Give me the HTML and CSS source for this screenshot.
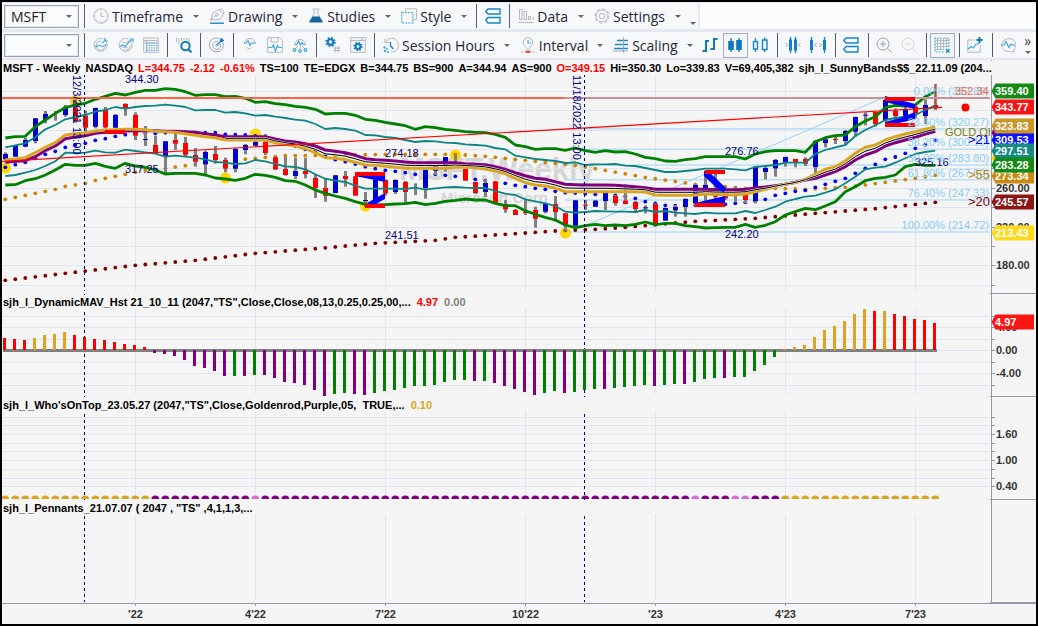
FILE: index.html
```html
<!DOCTYPE html>
<html lang="en">
<head>
<meta charset="utf-8">
<title>MSFT - Weekly</title>
<link rel="stylesheet" href="styles.css">
</head>
<body>
<div class="app">
<header class="toolbars">
  <div class="toolbar toolbar-main">
    <span class="combo"><select aria-label="Symbol"><option>MSFT</option></select></span>
    <span class="sep"></span>
    <button class="menu"><svg class="icon" viewBox="0 0 16 16"><g class="g"><circle cx="8" cy="8" r="7.2"/><path d="M8 4v4l3.5 1M8 1v1.5M8 13.5V15M1 8h1.5M13.5 8H15M4 4l-.8-.8M12 4l.8-.8M4 12l-.8.8M12 12l.8.8"/></g></svg>Timeframe<i class="caret"></i></button>
    <button class="menu"><svg class="icon" viewBox="0 0 16 16"><g class="g"><path d="M1.500 12L4 5l6-3.500 4.500 4.500L11 11.500z M1.500 12l5.500-4.500M9.500 1.500L13 1l2 3-.5 2"/><circle cx="8" cy="6.800" r="1.300"/></g><path class="b" d="M1 15.200h14"/></svg>Drawing<i class="caret"></i></button>
    <button class="menu"><svg class="icon" viewBox="0 0 16 16"><path class="g" d="M6 1.500v4.500L1.500 13.500M10 1.500v4.500l4.500 7.500M4.500 1h7"/><path class="fd" d="M4.500 8.500h7l3.500 6H1z"/></svg>Studies<i class="caret"></i></button>
    <button class="menu"><svg class="icon" viewBox="0 0 16 16"><path class="g" d="M4.500 4V.800h11v10.500h-3"/><path class="l" stroke-dasharray="2 1" d="M.800 4.500h11v10.500h-11z"/></svg>Style<i class="caret"></i></button>
    <span class="sep"></span>
    <button class="tool" aria-label="Align panes"><svg class="icon" viewBox="0 0 16 16"><path class="b" d="M3 1h12v5H3L.800 3.500zM3 9.500h12v5.500H3L.800 12.200z"/></svg></button>
    <span class="sep"></span>
    <button class="menu"><svg class="icon" viewBox="0 0 16 16"><path class="g" d="M1.500 1.500h2.500v10H1.500zM6 3.500h2.500v8H6zM10.500 8.500h2v3h-2zM14 10h1.500v1.500M.500 14.500h15" /></svg>Data<i class="caret"></i></button>
    <button class="menu"><svg class="icon" viewBox="0 0 16 16"><circle class="g" cx="8" cy="8" r="6"/><circle class="g" cx="8" cy="8" r="2.800"/><circle class="g" cx="8" cy="8" r="7.100" stroke-dasharray="2.800 2.780"/></svg>Settings<i class="caret"></i></button>
    <span class="more"><i class="caret small"></i></span>
  </div>
  <div class="toolbar">
    <span class="combo"><select aria-label="Account"><option></option></select></span>
    <span class="sep"></span>
    <button class="tool" aria-label="Target trend"><svg class="icon" viewBox="0 0 16 16"><path class="g" d="M13.500 5a6.500 6.500 0 1 1-3-3M12 10a4.500 4.500 0 1 1-4-6"/><path class="l" d="M1.500 8.500c2 3 3-1 5 0s3 2 7-1M9 6l4-3.500M12 1v3h3"/></svg></button>
    <button class="tool" aria-label="Target line"><svg class="icon" viewBox="0 0 16 16"><path class="g" d="M13.500 5a6.500 6.500 0 1 1-3-3M5 12.500c3 2 7 0 7-4"/><path class="l" d="M1.500 10l3-2 3 1.500 3-4 3-2.500M12 2h3v3"/><path class="g" d="M4 5l4 1 4-3M4 10l6 1"/></svg></button>
    <button class="tool" aria-label="Grid"><svg class="icon" viewBox="0 0 16 16"><path class="g" d="M.700 1h14.600v14.300H.700zM1 3.500h14M3.500 3.500v11.500M15 6h-14"/><path class="l" stroke-dasharray="1.500 1" d="M3 6h12M3 8.500h12M3 11h12M3 13.300h12"/></svg></button>
    <span class="sep"></span>
    <button class="tool" aria-label="Find"><svg class="icon" viewBox="0 0 16 16"><path class="g" d="M.500 1v4M3 1v6M5.500 1v3M8 1v2M10.500 1v2M13 1v3"/><circle class="b2" cx="9.500" cy="9" r="4.200"/><path class="b2" d="M12.500 12.500l3 3"/></svg></button>
    <span class="sep"></span>
    <button class="tool" aria-label="Target"><svg class="icon" viewBox="0 0 16 16"><path class="gd" d="M14 5.500A7 7 0 1 1 10.500 1.600M11.500 7A4 4 0 1 1 9 4.600"/><circle class="gd" cx="7.700" cy="8.300" r="1"/><path class="b" d="M8 8l5.500-5.500"/><path class="fb" d="M10.500 3l2.500-2.500.5 2 2 .5-2.500 2.500z"/></svg></button>
    <span class="sep"></span>
    <button class="tool" aria-label="Pulse"><svg class="icon" viewBox="0 0 16 16"><path class="g" d="M2.300 7a5.500 5.500 0 1 1 11 0M4.500 10.500l3 1.500 2-1.500"/><path class="l" d="M2 6h2.500L6 3.500l2 5L9.500 6H13.500"/></svg></button>
    <button class="tool" aria-label="Save analysis"><svg class="icon" viewBox="0 0 16 16"><path class="g" d="M.700.700h12l2.600 2.500v12.100H.700zM4 1v4h7V1"/><path class="l" d="M1 10.500h4l1.500-2.500 2 6 2-5.500 1 2H15"/></svg></button>
    <button class="tool" aria-label="Share analysis"><svg class="icon" viewBox="0 0 16 16"><path class="g" d="M2.500 8a5.500 5.500 0 1 1 11 0M6 9l-3 3M10 9l3 3M8 9v4"/><path class="l" d="M3 7.500h2L6.500 4l2 4L10 5.500l1.500 2h2"/><g class="l"><circle cx="2.500" cy="13" r="1.300"/><circle cx="8" cy="14" r="1.300"/><circle cx="13.500" cy="13" r="1.300"/></g></svg></button>
    <span class="sep"></span>
    <button class="tool" aria-label="Number format"><svg class="icon" viewBox="0 0 16 16"><circle class="b2" cx="5.500" cy="5" r="2.800"/><circle class="b2" cx="5.500" cy="5" r="4.200" stroke-dasharray="1.600 1.700"/><path class="g" d="M11 9l-1 6.500M14 9l-1 6.500M8.500 11h7M8 13.500h7"/></svg></button>
    <button class="tool" aria-label="Window settings"><svg class="icon" viewBox="0 0 16 16"><path class="g" d="M.700.700h14.600v14.600H.700zM1 3.500h14M11 2.200h2"/><circle class="b2" cx="8" cy="9.500" r="2.400"/><circle class="b2" cx="8" cy="9.500" r="3.700" stroke-dasharray="1.400 1.500"/></svg></button>
    <span class="sep"></span>
    <button class="menu"><svg class="icon" viewBox="0 0 16 16"><path class="g" d="M2.500 5A7 7 0 1 1 8 15.200M2 1.500V5.500h4"/><path class="b" d="M7.500 5v4l3 3"/><g class="fl"><circle cx="1.500" cy="10.500" r="1.200"/><circle cx="4" cy="12" r="1"/><circle cx="2" cy="14" r="1.200"/><circle cx="5" cy="15" r="1"/></g></svg>Session Hours<i class="caret"></i></button>
    <button class="menu"><svg class="icon" viewBox="0 0 16 16"><path class="g" d="M8 13.500L4.500 8.500a4.700 4.700 0 1 1 7 0zM1 15h3M12 15h3"/><path class="l" d="M8 3v3h2.500"/><path class="r" d="M5.500 14.800h5"/></svg>Interval<i class="caret"></i></button>
    <button class="menu"><svg class="icon" viewBox="0 0 16 16"><path class="b" d="M4 3.500h11M2 7.500h13M1 11.500h14"/><path class="gd" d="M10.500.500v15M0 14h15"/></svg>Scaling<i class="caret"></i></button>
    <button class="tool" aria-label="OHLC bars"><svg class="icon" viewBox="0 0 16 16"><path class="b2" d="M4 3v12M4 4h3M.500 14H4M12 1v12M12 2h3.500M8.500 12H12"/></svg></button>
    <button class="tool active" aria-label="Candlesticks"><svg class="icon" viewBox="0 0 16 16"><path class="b" d="M4 1v14M12 1v14"/><path class="fb" d="M1.200 4h5.600v9H1.200zM9.200 3h5.600v10H9.200z"/></svg></button>
    <button class="tool" aria-label="Hollow candles"><svg class="icon" viewBox="0 0 16 16"><path class="b" d="M1.500 4.500h4v7.500h-4zM3.500 1v3.500M3.500 12v3M10.500 3h4.500v9.500h-4.500zM12.700.500V3M12.700 12.500V15"/></svg></button>
    <span class="sep"></span>
    <button class="tool" aria-label="Decrease bar spacing"><svg class="icon" viewBox="0 0 16 16"><path class="b3" d="M5.500 2.500v11M10.500 2.500v11"/><path class="b" d="M5.500 0v16M10.500 0v16"/><path class="gd" d="M.500 6l2 2-2 2M15.500 6l-2 2 2 2"/></svg></button>
    <button class="tool" aria-label="Increase bar spacing"><svg class="icon" viewBox="0 0 16 16"><path class="b3" d="M1.500 3v10M14.500 3v10"/><path class="b" d="M1.500 0v16M14.500 0v16"/><path class="gd" d="M6.500 6l-2 2 2 2M9.500 6l2 2-2 2"/></svg></button>
    <span class="sep"></span>
    <button class="tool" aria-label="Stack panes"><svg class="icon" viewBox="0 0 16 16"><path class="b" d="M3 1h12v5H3L.800 3.500zM3 9.500h12v5.500H3L.800 12.200z"/></svg></button>
    <span class="sep"></span>
    <button class="tool" aria-label="Zoom in"><svg class="icon" viewBox="0 0 16 16"><g class="gd"><circle cx="7" cy="7" r="6"/><path d="M11.500 11.500l4 4M4 7h6M7 4v6"/></g></svg></button>
    <button class="tool" aria-label="Zoom out"><svg class="icon" viewBox="0 0 16 16"><g class="gl"><circle cx="7" cy="7" r="6"/><path d="M11.500 11.500l4 4M4 7h6"/></g></svg></button>
    <span class="sep"></span>
    <button class="tool active" aria-label="Data window"><svg class="icon" viewBox="0 0 16 16"><path class="g" d="M1 3.500h14M1 6.500h14M1 9.500h14M1 12.500h9M3.500 1v12M6.500 1v12M9.500 1v12M12.500 1v9"/><path class="l" stroke-dasharray="1.500 1.500" d="M1 1h14v9M1 1v14h9"/><path class="b" d="M12 12l3.500 3.500M15.500 12L12 15.500"/></svg></button>
    <span class="sep"></span>
    <button class="tool" aria-label="Add study"><svg class="icon" viewBox="0 0 16 16"><path class="g" d="M8 3H.800v12.200h12.500V8"/><path class="l" d="M1 12l3-2.500 2.500 1.500L9 7h2.500l1.500-2"/><path class="b2" d="M12.500 0v6M9.500 3h6"/></svg></button>
    <span class="sep"></span>
    <button class="tool" aria-label="Chart commentary"><svg class="icon" viewBox="0 0 16 16"><path class="g" d="M13.500 13A7.200 6.500 0 1 0 8 14.500l6.500.5z"/><path class="l" d="M1 8h3l2-3.500 3 6L11 7l1 1h3"/></svg></button>
    <span class="more"><span class="chev">»</span><i class="caret small"></i></span>
  </div>
</header>

<main class="chart">
  <section class="pane">
    <h2 class="caption quote"><span>MSFT - Weekly</span><span>NASDAQ</span><span class="neg">L=344.75</span><span class="neg">-2.12</span><span class="neg">-0.61%</span><span>TS=100</span><span>TE=EDGX</span><span>B=344.75</span><span>BS=900</span><span>A=344.94</span><span>AS=900</span><span class="neg">O=349.15</span><span>Hi=350.30</span><span>Lo=339.83</span><span>V=69,405,382</span><span>sjh_l_SunnyBands$$_22.11.09 (204...</span></h2>
    <svg class="plot" id="price" viewBox="2 60 1034 234"></svg>
  </section>
  <section class="pane">
    <h2 class="caption"><span>sjh_l_DynamicMAV_Hst 21_10_11 (2047,"TS",Close,Close,08,13,0.25,0.25,00,...</span><span class="neg">4.97</span><span class="flat">0.00</span></h2>
    <svg class="plot" id="mav" viewBox="2 294 1034 103"></svg>
  </section>
  <section class="pane">
    <h2 class="caption"><span>sjh_l_Who'sOnTop_23.05.27 (2047,"TS",Close,Goldenrod,Purple,05,&nbsp; TRUE,...</span><span class="gold">0.10</span></h2>
    <svg class="plot" id="ontop" viewBox="2 397 1034 103"></svg>
  </section>
  <section class="pane">
    <h2 class="caption"><span>sjh_l_Pennants_21.07.07 ( 2047 , "TS" ,4,1,1,3,...</span></h2>
    <svg class="plot" id="pennants" viewBox="2 500 1034 103"></svg>
  </section>
  <svg class="plot" id="time" viewBox="2 603 1034 21"></svg>
</main>
</div>
<script src="chart.js"></script>
</body>
</html>
```

FILE: styles.css
```css
* { box-sizing: border-box; }
body { margin: 0; background: #000; font-family: "Open Sans", "Noto Sans", sans-serif; }
.app { border: 2px solid #000; background: #f5f5f5; }

.toolbars { background: #e3e8f1; padding: 1px 0 2px; display: flex; flex-direction: column; gap: 3px; overflow: hidden; }
.toolbar { display: flex; align-items: center; height: 26px; padding-left: 2px; background: #f7f8fa; }
.toolbar-main { background: linear-gradient(90deg, #f7f8fa 696px, #e3e8f1 696px 698px, #fcfcfe 698px); }
.combo { position: relative; display: block; flex: none; width: 76px; height: 23px; }
.combo select { appearance: none; width: 75px; height: 23px; margin: 0; padding: 0 6px; border: 1px solid #9aa2b2; border-radius: 0; background: #fafbfc; color: #222; font: 14px "Open Sans", sans-serif; box-shadow: inset 0 0 0 1px #e3e7ee; }
.combo::after { content: ""; position: absolute; right: 8px; top: 10px; border: 3px solid transparent; border-top-color: #666; border-bottom: 0; }
.sep { flex: none; width: 8px; height: 24px; background: linear-gradient(#565c6c, #565c6c) 4px 0 / 1px 100% no-repeat; }
button { margin: 0; border: 0; background: none; color: #1e2638; font: 14px "Open Sans", "Noto Sans", sans-serif; white-space: nowrap; }
.tool { flex: none; display: flex; align-items: center; justify-content: center; width: 25px; height: 25px; padding: 0; }
.tool.active { border: 1px solid #a4acb8; background: #f3f6f9; }
.menu { flex: none; display: flex; align-items: center; height: 25px; gap: 3px; padding: 0 5px; }
.icon { flex: none; display: block; width: 16px; height: 16px; fill: none; }
.caret { flex: none; margin-left: 6px; width: 6px; border: 3px solid transparent; border-top-color: #666; border-bottom: 0; }
.toolbar-main .caret { margin-left: 7px; }
.toolbar .caret.small { margin: 0; }
.more { flex: none; display: flex; flex-direction: column; justify-content: flex-end; align-items: center; gap: 4px; width: 14px; height: 25px; padding-bottom: 4px; }
.chev { font: 14px/12px "Open Sans", sans-serif; color: #444; }

.g, .gd, .gl, .b, .b2, .b3, .l, .r { fill: none; }
.g { stroke: #b4bac2; stroke-width: 1; }
.gd { stroke: #9ba5b0; stroke-width: 1; }
.gl { stroke: #d2d6da; stroke-width: 1; }
.b { stroke: #1686c8; stroke-width: 1.4; }
.b2 { stroke: #1079bd; stroke-width: 2; }
.b3 { stroke: #1079bd; stroke-width: 3; }
.l { stroke: #41aade; stroke-width: 1.2; }
.r { stroke: #e04030; stroke-width: 2; }
.fb { fill: #1079bd; }
.fd { fill: #17659c; }
.fl { fill: #41aade; }

.pane { position: relative; }
.plot { display: block; width: 100%; height: auto; font-family: "Liberation Sans", Arial, sans-serif; font-size: 11px; }
.caption { position: absolute; top: 1px; left: 1px; z-index: 1; display: flex; gap: 6px; margin: 0; height: 14px; font: bold 11px/15px "Liberation Sans", Arial, sans-serif; color: #000; background: #f5f5f5; white-space: nowrap; }
.caption.quote { gap: 5px; }
.neg { color: #f00; }
.flat { color: #808080; }
.gold { color: #daa520; }

.grid { stroke: #e0e5f0; stroke-width: 1; }
.axis { stroke: #929aaa; stroke-width: 1; }
.scale { font-weight: bold; fill: #333; }
.tagtext { font-weight: bold; fill: #fff; }
.mark { stroke: navy; stroke-width: 1; stroke-dasharray: 3 3; }
.note { fill: navy; }
.fib { stroke: #b9dff8; stroke-width: 1.5; }
.fibtext { fill: #87cefa; text-anchor: end; }
.mid { text-anchor: middle; }
.line { fill: none; stroke-linejoin: round; }
.water { fill: #d6d6d6; font-weight: bold; }
.water-lg { font-size: 31px; }
.water-sm { font-size: 15px; }
.side { font-size: 13px; }
```

FILE: chart.js
```javascript
const NS = "http://www.w3.org/2000/svg";
const $ = id => document.getElementById(id);
function add(to, tag, attrs, text) {
  const e = document.createElementNS(NS, tag);
  for (const k in attrs) e.setAttribute(k, attrs[k]);
  if (text !== undefined) e.textContent = text;
  to.appendChild(e);
  return e;
}
const seg = (to, x1, y1, x2, y2, a) => add(to, "line", { x1, y1, x2, y2, ...a });
const box = (to, x, y, width, height, fill) => add(to, "rect", { x, y, width, height, fill });
const label = (to, x, y, s, cls, a) => add(to, "text", { x, y, class: cls, ...a }, s);

const BLUE = "#0000d0", RED = "#ff0000", GOLD = "#daa520", PURPLE = "#800080", GREEN = "#008000", TEAL = "#0c8484";
const months = [135.5, 255.5, 385.5, 525.5, 655.5, 785.5, 915.5];

function frame(svg, top, bottom, rows, ticks) {
  for (const x of months) seg(svg, x, top + 14, x, bottom - 3, { class: "grid" });
  for (const y of rows) {
    seg(svg, 2, y + .5, 990, y + .5, { class: "grid" });
    seg(svg, 991, y + .5, 995, y + .5, { class: "axis" });
  }
  seg(svg, 991.5, top, 991.5, bottom, { class: "axis" });
  seg(svg, 990, bottom - .5, 1036, bottom - .5, { class: "axis" });
  for (const [y, s] of ticks) label(svg, 996, y + 4, s, "scale");
}
function sessions(svg, top, bottom) {
  for (const x of [84.5, 584.5]) seg(svg, x, top, x, bottom, { class: "mark" });
}
function tag(svg, y, s, color, h = 15) {
  add(svg, "path", { d: `M991.5 ${y}l4-${h / 2}h38.500v${h}h-38.500z`, fill: color });
  label(svg, 995, y + 4, s, "tagtext");
}

/* Price pane: series values are [bar, y] knots, in thirds of a unit below the pane top. */
const Y = c => 60 + c / 3;
const X = i => 5.3 + 10 * i;
const dense = (start, s) => s.split(" ").map((v, k) => [start + k, +v]);
const upperGreen = dense(0, "234 230 229 200 180 160 143 135 130 118 109 100 105 97 91 91 86 88 95 106 104 104 110 109 115 127 125 131 134 139 142 148 162 160 160 166 178 181 187 192 197 208 200 203 208 211 215 217 218 223 232 255 260 268 266 266 271 264 272 277 272 276 275 282 292 296 303 304 299 296 290 290 290 290 297 282 275 272 272 272 277 245 233 227 225 200 183 170 143 136 138 135 110 95");
const upperTeal = dense(0, "262 256 250 232 208 195 178 171 165 155 150 141 146 141 138 137 134 137 141 151 150 150 158 156 160 167 165 170 174 179 182 192 207 204 207 212 225 226 231 234 240 246 243 244 248 249 253 255 257 264 268 287 292 297 300 303 309 307 315 313 313 312 317 318 324 330 336 336 333 330 326 326 326 328 331 321 318 315 308 308 308 282 270 262 255 228 210 196 180 174 170 165 150 137");
const midGold = dense(0, "299 297 293 278 262 248 225 221 219 213 210 209 208 208 209 214 215 217 221 226 230 233 240 240 240 240 240 248 253 258 266 278 293 295 299 307 315 316 319 322 325 325 325 325 325 322 322 323 327 333 341 355 368 375 378 385 395 395 395 395 395 395 395 395 396 405 406 406 406 406 402 403 404 404 402 395 388 380 372 368 358 343 328 320 303 280 262 255 240 230 222 215 208 201");
const midPurple = dense(0, "307 304 302 290 272 258 236 231 227 220 217 214 213 212 212 212 214 214 215 217 221 225 230 230 230 230 230 237 243 246 251 258 270 274 278 286 296 299 301 303 306 308 308 308 308 308 311 313 314 320 328 338 347 355 358 365 373 374 375 375 375 376 378 380 383 388 388 388 388 388 388 389 389 389 388 384 381 377 373 367 360 355 345 335 320 300 285 275 258 248 240 232 222 214");
const lowerTeal = dense(0, "348 345 338 330 318 304 278 279 278 272 277 278 269 273 277 281 290 287 290 293 298 306 308 312 310 300 304 312 319 321 328 343 356 362 366 377 386 386 386 386 387 383 389 385 382 381 383 384 384 393 401 405 418 424 430 438 455 458 456 453 454 455 455 456 450 456 453 458 460 462 458 460 460 460 453 459 450 440 425 417 410 407 398 388 370 350 328 323 320 308 295 282 276 272");
const lowerGreen = dense(0, "375 374 362 356 345 330 313 316 316 310 319 325 310 318 322 330 342 340 340 340 345 354 357 361 355 343 346 352 362 364 375 390 400 408 415 425 433 434 434 432 431 427 434 430 424 421 417 420 420 430 437 437 452 463 472 480 495 503 497 493 497 495 497 493 486 494 490 490 497 500 504 503 502 502 493 502 496 485 465 455 445 449 438 425 395 380 362 355 352 345 320 313 316 316");
const blueDots = dense(0, "322 314 307 295 283 274 262 255 250 241 236 229 224 220 220 220 218 216 218 218 218 218 223 224 225 228 233 245 252 258 268 275 287 299 305 312 320 326 331 334 338 343 342 343 346 349 352 358 362 370 370 376 380 385 388 394 398 399 401 403 404 406 409 415 425 430 436 437 436 436 435 434 433 430 427 424 418 406 400 394 391 382 373 364 355 340 325 313 298 291 280 265 254 241");
const goldDots = [[0,418],[5,388],[6,379],[8,370],[9,361],[12,343],[14,330],[16,325],[19,313],[22,303],[25,295],[28,287],[33,286],[38,283],[45,283],[48,289],[50,295],[54,307],[57,316],[60,331],[64,352],[69,373],[74,385],[77,385],[80,388],[84,382],[88,367],[93,346]];
const maroonDots = [[0,661],[6,640],[13,616],[19,601],[25,580],[31,566],[37,550],[43,541],[45,532],[50,523],[53,517],[56,511],[59,508],[62,502],[65,494],[69,484],[75,475],[81,460],[87,446],[93,427]];
function at(knots, i) {
  for (let k = 1; k < knots.length; k++) {
    const [a, p] = knots[k - 1], [b, q] = knots[k];
    if (i <= b) return p + (q - p) * (i - a) / (b - a);
  }
}
const path = pts => pts.map(([i, c]) => `${X(i).toFixed(1)},${Y(c).toFixed(1)}`).join(" ");
const curve = (svg, pts, stroke, w) => add(svg, "polyline", { points: path(pts), stroke, "stroke-width": w, class: "line" });

/* wick top, wick bottom, body top, body bottom, colour */
const candles = `277 298 282 298 B|255 290 255 290 B|233 262 240 260 B|174 250 175 243 B|153 190 162 180 B|153 182|135 170 140 165 B|118 188 143 182 R|152 215 167 203 R|143 205 144 200 B|141 205 150 202 R|162 205 165 203 B|130 167 132 144 R|157 240 165 227 R|198 258 237 240 B|227 282 255 281 R|243 340 244 290 B|222 270 240 251 R|231 290 249 284 R|264 320 285 305 R|272 347 276 313 B|258 305 282 300 R|293 337 300 326 R|264 337 267 326 B|252 283 255 270 B|232 258 246 257 B|222 285 246 279 R|290 330 292 328 R|291 347 327 345 R|293 357 333 348 B|293 355 333 342 R|345 414 354 384 R|356 425 384 407 R|345 400 346 399 B|333 380 348 357 R|348 406 349 407 R|396 440 420 423 B|355 425 360 420 B|358 407 360 400 R|358 402 360 396 B|363 430 366 396 R|370 405|328 416 330 384 B|315 345 318 332 B|291 335 291 315 B|283 320|325 362 327 362 R|365 402 366 399 R|358 411 369 396 B|363 430 364 428 R|420 458 432 448 R|447 465 450 465 R|415 465 456 459 R|440 503 450 476 R|428 460 430 455 B|408 485 432 456 R|460 515 460 498 R|420 498 421 497 B|420 450 434 437 R|420 441 422 440 B|396 450 399 423 B|405 437 408 429 R|373 433 422 432 R|423 459 426 447 R|436 460 442 445 B|430 500 432 490 R|443 482 444 482 B|435 470 441 451 B|415 470 417 441 B|372 440 375 430 B|340 440 375 393 B|340 430 385 410 R|385 420 395 415 R|380 425|390 430 395 420 R|318 430 320 423 B|320 358 324 336 B|297 350 300 325 B|290 320 291 307 B|297 322 297 307 R|292 318 297 311 R|240 340 243 321 B|233 262 238 249 B|228 252 237 240 R|210 252 213 243 B|170 230 171 215 B|157 196 164 167 B|156 200 156 192 R|115 185 120 180 B|145 180 153 168 R|140 185 148 180 B|135 175 140 160 R|118 192 135 168 B|130 150 135 143 R`.split("|");

function drawPrice() {
  const s = $("price");
  label(s, 399, 180, "MSFT,Weekly", "water water-lg");
  label(s, 441, 203, "Microsoft Corp", "water water-sm");
  frame(s, 60, 294, [91, 110, 130, 149, 168, 188, 207, 227, 246, 265, 285], [[188, "260.00"], [227, "220.00"], [265, "180.00"]]);
  for (const y of [128.7, 149.2, 165, 179.8, 200, 232]) seg(s, 565, y, 990, y, { class: "fib" });
  seg(s, 573, 231, 885, 97, { stroke: "#96d2fa" });
  for (const [x, y] of [[75, 101], [5, 168], [225, 178], [255, 134], [365, 206], [455, 155], [565, 233]]) add(s, "circle", { cx: x + .5, cy: y, r: 5.5, fill: "#ffd700" });
  for (let i = 0; i < 94; i++) {
    add(s, "circle", { cx: X(i), cy: Y(at(maroonDots, i)), r: 1.9, fill: "#800000" });
    add(s, "circle", { cx: X(i), cy: Y(at(goldDots, i)), r: 1.9, fill: "#cd8500" });
    add(s, "circle", { cx: X(i), cy: Y(at(blueDots, i)), r: 1.9, fill: "#0000ff" });
  }
  candles.forEach((row, i) => {
    const [a, b, c, d, k] = row.split(" ");
    box(s, 4 + 10 * i, Y(+a), 3, (b - a) / 3, "#808080");
    if (k) box(s, 3 + 10 * i, Y(+c), 5, (d - c) / 3, k === "B" ? BLUE : RED);
  });
  seg(s, 935.5, 84, 935.5, 104, { stroke: "#bd4545", "stroke-width": 2.5 });
  curve(s, upperTeal, TEAL, 1.8);
  curve(s, lowerTeal, TEAL, 1.8);
  curve(s, midPurple, PURPLE, 3);
  curve(s, midGold, GOLD, 3);
  const middle = midGold.map(([i, c], k) => [i, (c + midPurple[k][1]) / 2]).slice(22);
  curve(s, middle, "#e8e8e8", 2);
  curve(s, middle, "#000", 1);
  curve(s, upperGreen, GREEN, 2.8);
  curve(s, lowerGreen, GREEN, 2.8);
  seg(s, 2, 98, 565, 98, { stroke: "#ff6347", "stroke-width": 2 });
  seg(s, 565, 98, 990, 98, { stroke: "#cb9199", "stroke-width": 2 });
  seg(s, 2, 161.4, 942, 107.4, { stroke: RED, "stroke-width": 1.1 });

  for (const p of ["355,174 385,176 385,182 355,176", "367,203 385,193 385,199 374,205", "704,171 708,171 726,188 724,192 720,191 704,176", "695,203 725,196 725,204 695,205", "885,96 915,104 915,109 885,102", "885,122 900,118 915,112 915,119 895,124 885,124"])
    add(s, "polygon", { points: p, fill: "#0000ff" });
  for (const [x, y, w] of [[105, 130, 20], [355, 172, 30], [365, 204, 20], [705, 170, 20], [695, 203, 30], [885, 97, 30], [885, 123, 30]]) box(s, x, y, w, 4, RED);
  sessions(s, 74, 291);

  for (const [x, y, t] of [[125, 83, "344.30"], [125, 173, "317.25"], [385, 157, "274.18"], [385, 239, "241.51"], [725, 155, "276.76"], [725, 238, "242.20"], [915, 166, "325.16"], [915, 75, "361.47"]]) label(s, x, y, t, "note");
  add(s, "text", { transform: "translate(73 75) rotate(90)", class: "note" }, "12/3/2021 13:00");
  add(s, "text", { transform: "translate(573 75) rotate(90)", class: "note" }, "11/18/2022 13:00");
  for (const [y, t] of [[95, "0.00% (352.88)"], [126, "23.60% (320.27)"], [146, "38.20% (300.10)"], [162, "50.00% (283.80)"], [177, "61.80% (267.50)"], [197, "76.40% (247.33)"], [229, "100.00% (214.72)"]]) label(s, 989, y, t, "fibtext");
  label(s, 955, 95, "352.34", "", { fill: "#ff6347" });
  label(s, 945, 136, "GOLD.OI", "", { fill: "#808000" });
  label(s, 968, 144, ">21", "side", { fill: "#0000d8" });
  label(s, 968, 179, ">55", "side", { fill: "#b8860b" });
  label(s, 968, 206, ">20", "side", { fill: "#800000" });
  add(s, "circle", { cx: 965.5, cy: 107.5, r: 4, fill: RED });

  tag(s, 158, "283.80", "#ffd700");
  tag(s, 133, "316.33", PURPLE);
  tag(s, 140, "309.53", "#1010ff");
  tag(s, 126, "323.83", "#cc9529");
  tag(s, 151, "297.51", "#178b83");
  tag(s, 176, "273.34", "#ca8b14");
  tag(s, 165, "283.28", "#138a13");
  tag(s, 91, "359.40", "#138a13");
  tag(s, 107, "343.77", "#f81414");
  tag(s, 202, "245.57", "#8b1616");
  tag(s, 233, "213.43", "#ffd91a");
}

function drawMav() {
  const s = $("mav");
  frame(s, 294, 397, [316, 327, 339, 350, 362, 373, 385], [[327, "4.00"], [350, "0.00"], [373, "-4.00"]]);
  sessions(s, 294, 397);
  const values = "144 147 150 144 135 132 126 135 141 147 150 156 162 165 171 189 192 198 210 228 234 243 258 258 258 255 255 264 276 279 285 300 318 312 309 312 315 309 303 300 294 288 288 285 276 270 270 273 273 279 288 297 306 315 309 303 309 306 300 297 297 294 291 288 285 288 285 282 282 276 267 264 264 261 261 243 225 201 177 171 165 141 120 108 93 72 57 63 63 72 78 87 90 99".split(" ");
  const kinds = "RRRYYYYRRRRRRRRPPPPPPPPGPGPPPPPPPGGPPGGGGGGGGGGPGPPPPPGGPGGGPGGGGPGGPGGGPGGGGGYYYYYYYYYRYRRRRR";
  const colors = { R: RED, Y: GOLD, P: PURPLE, G: GREEN };
  seg(s, 3, 350.5, 937, 350.5, { stroke: "#808080", "stroke-width": 3 });
  values.forEach((v, i) => {
    const y = 290 + v / 3;
    box(s, 3 + 10 * i, Math.min(y, 350), 3, Math.abs(350 - y), colors[kinds[i]]);
  });
  tag(s, 322, "4.97", "#ff1414");
}

function drawOnTop() {
  const s = $("ontop");
  frame(s, 397, 500, [417, 425, 434, 443, 451, 460, 469, 478, 486], [[434, "1.60"], [460, "1.00"], [486, "0.40"]]);
  sessions(s, 414, 500);
  for (let i = 0; i < 94; i++) {
    const fill = [25, 69, 73, 74].includes(i) ? "#d56edb" : i < 15 || i > 77 ? GOLD : PURPLE;
    add(s, "path", { d: `M${X(i) - 3.9} 499a3.9 3.500 0 0 1 7.8 0z`, fill });
  }
}

function drawPennants() {
  const s = $("pennants");
  frame(s, 500, 603, [], []);
  sessions(s, 516, 602);
}

function drawTime() {
  const s = $("time");
  seg(s, 2, 603.5, 1036, 603.5, { class: "axis" });
  ["'22", "4'22", "7'22", "10'22", "'23", "4'23", "7'23"].forEach((t, k) => {
    seg(s, months[k], 603, months[k], 606, { class: "axis" });
    label(s, months[k], 618, t, "scale mid");
  });
}

drawPrice();
drawMav();
drawOnTop();
drawPennants();
drawTime();
```
